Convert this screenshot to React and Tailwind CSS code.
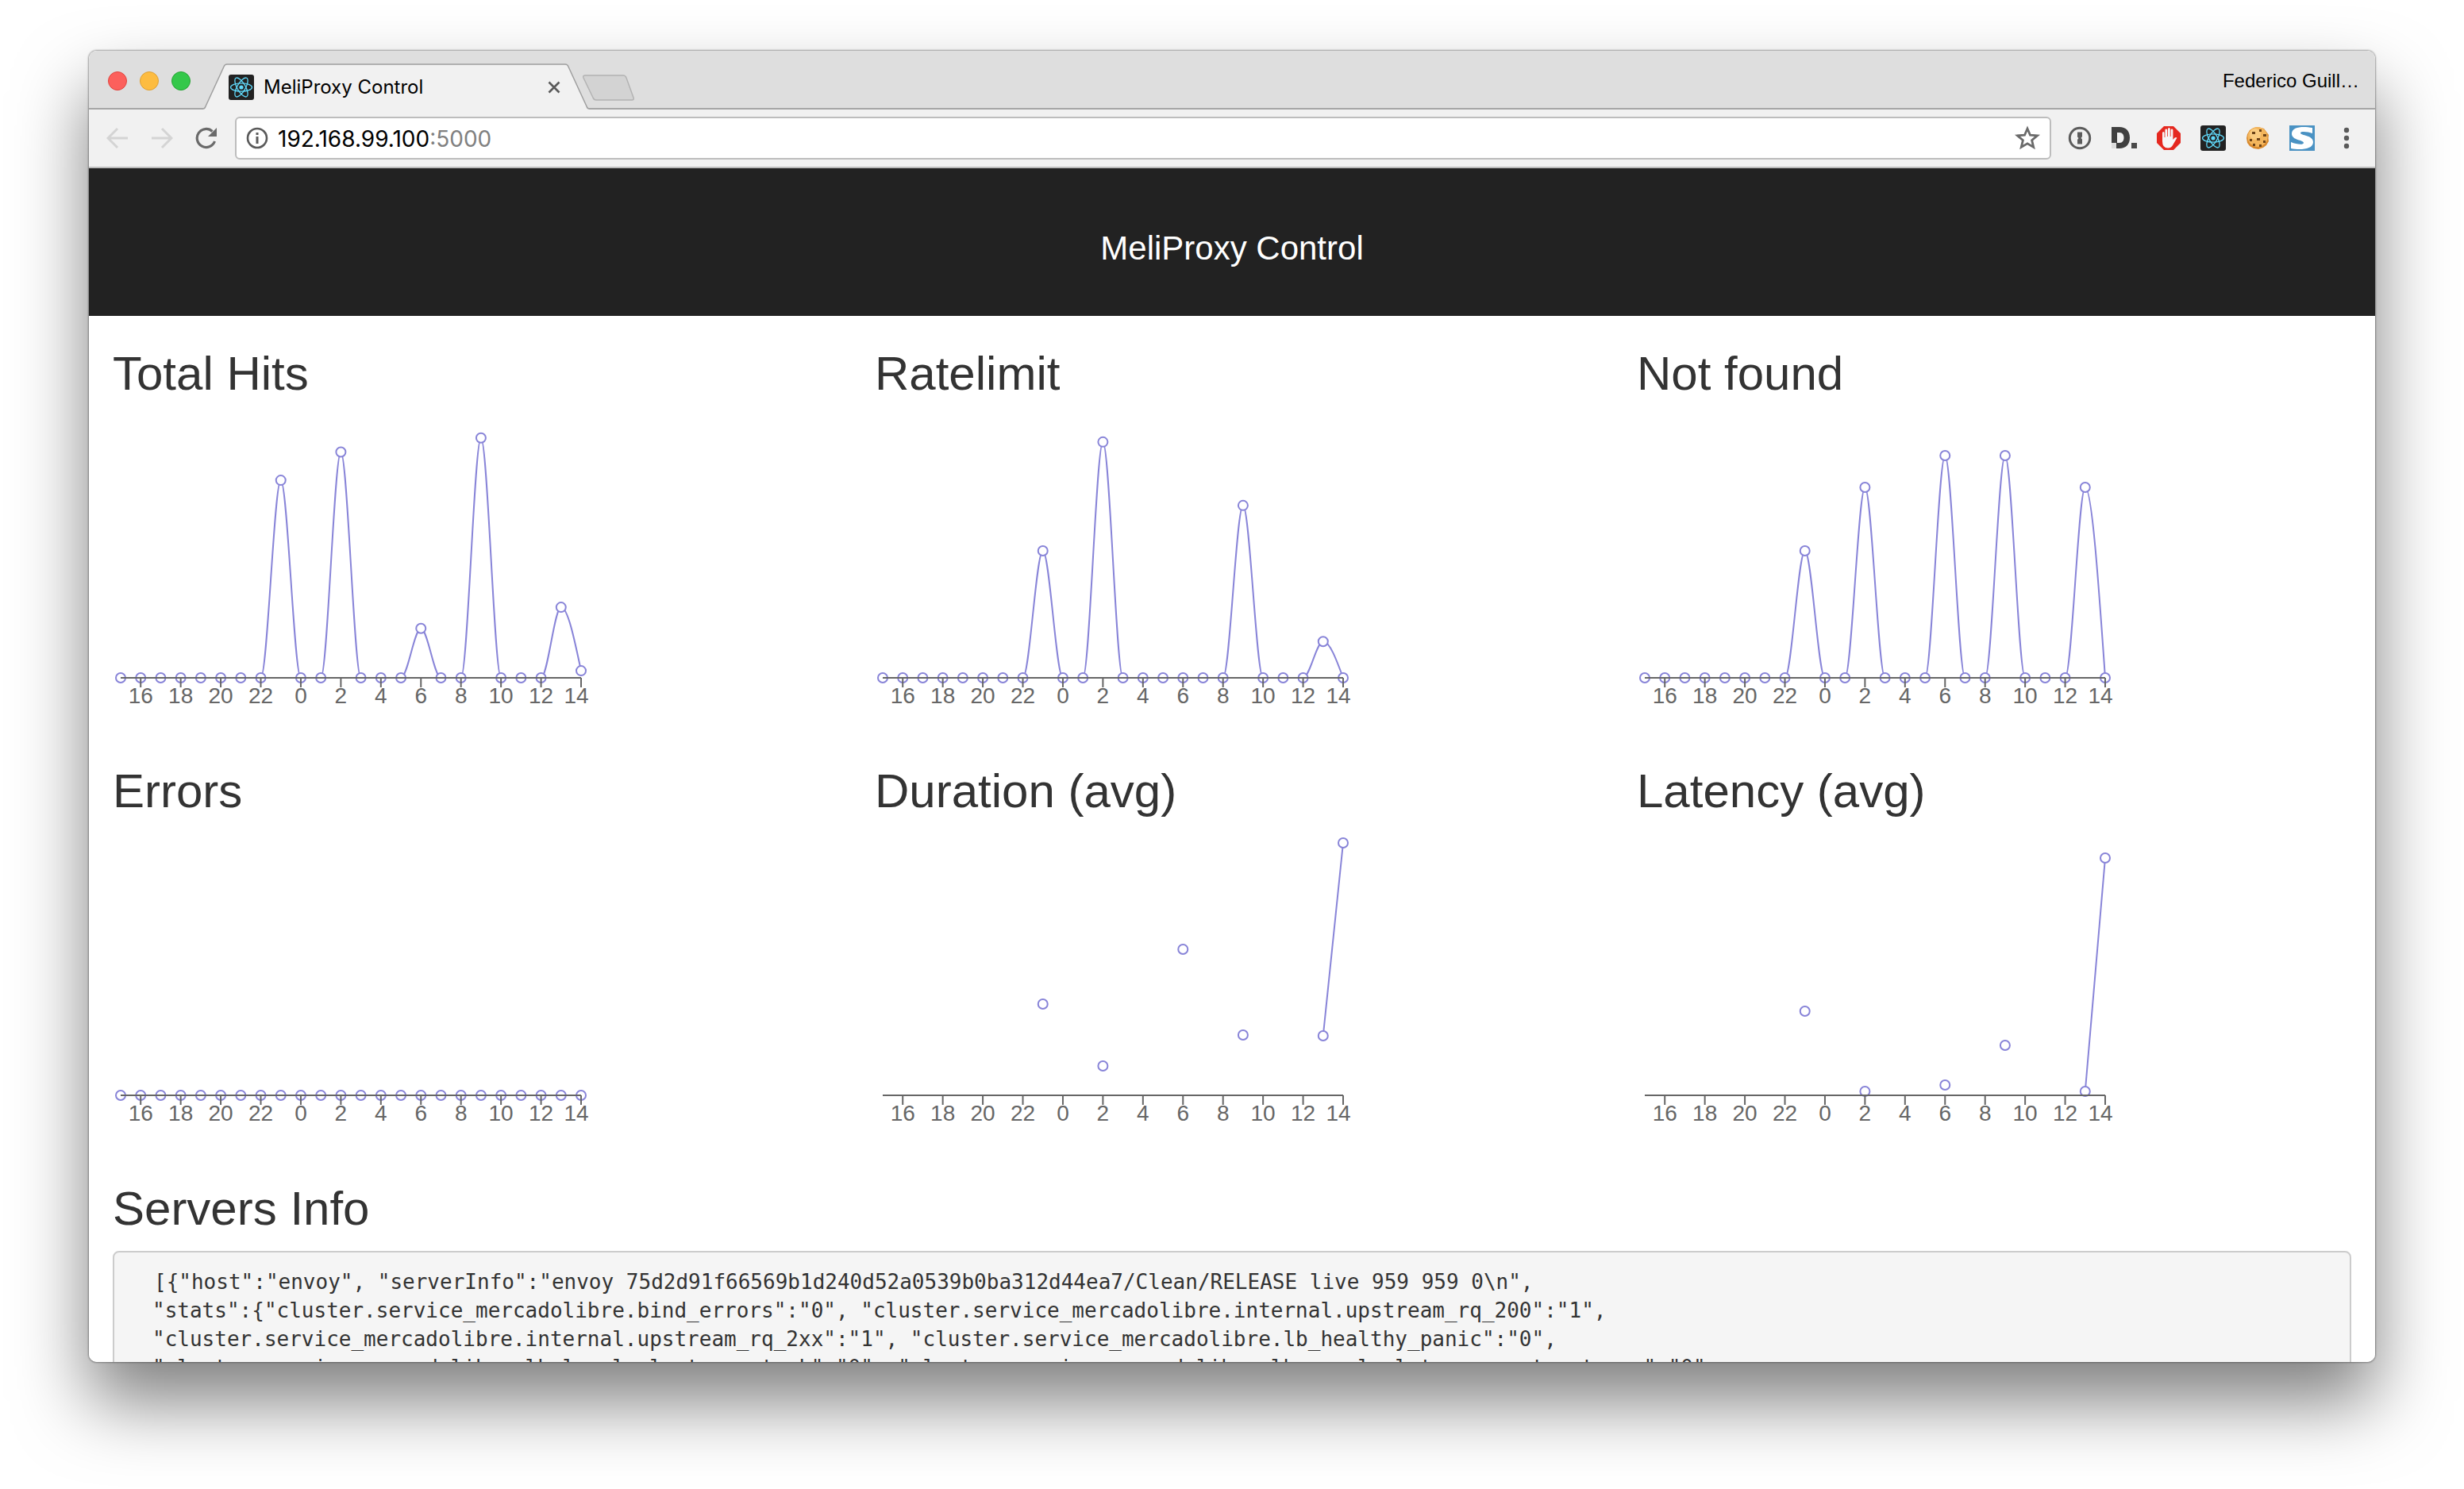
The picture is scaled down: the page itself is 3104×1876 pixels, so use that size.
import React from "react";

const HOURS = [15, 16, 17, 18, 19, 20, 21, 22, 23, 0, 1, 2, 3, 4, 5, 6, 7, 8, 9, 10, 11, 12, 13, 14];

const CHARTS = [
  { title: "Total Hits", max: 36, fill: 0, values: { 23: 28, 2: 32, 6: 7, 9: 34, 13: 10, 14: 1 } },
  { title: "Ratelimit", max: 28, fill: 0, values: { 23: 14, 2: 26, 9: 19, 13: 4 } },
  { title: "Not found", max: 8, fill: 0, values: { 23: 4, 2: 6, 6: 7, 9: 7, 13: 6 } },
  { title: "Errors", max: 4, fill: 0, values: {} },
  { title: "Duration (avg)", max: 320, fill: null, values: { 23: 115, 2: 37, 6: 184, 9: 76, 13: 75, 14: 318 } },
  { title: "Latency (avg)", max: 320, fill: null, values: { 23: 106, 2: 5, 6: 13, 9: 63, 13: 5, 14: 299 } },
];

const BASE = 330;
const PLOT = 320;

// Monotone cubic interpolation through a run of points.
function monotonePath(p) {
  const n = p.length;
  if (n < 2) return "";
  if (n === 2) return `M${p[0].x},${p[0].y}L${p[1].x},${p[1].y}`;
  const slope = (i) => (p[i + 1].y - p[i].y) / (p[i + 1].x - p[i].x);
  const t = p.map((_, i) => {
    if (i === 0 || i === n - 1) return 0;
    const a = slope(i - 1);
    const b = slope(i);
    return (Math.sign(a) + Math.sign(b)) * Math.min(Math.abs(a), Math.abs(b), 0.25 * Math.abs(a + b)) || 0;
  });
  t[0] = (3 * slope(0) - t[1]) / 2;
  t[n - 1] = (3 * slope(n - 2) - t[n - 2]) / 2;
  let d = `M${p[0].x},${p[0].y}`;
  for (let i = 0; i < n - 1; i++) {
    const h = (p[i + 1].x - p[i].x) / 3;
    d += `C${p[i].x + h},${p[i].y + h * t[i]} ${p[i + 1].x - h},${p[i + 1].y - h * t[i + 1]} ${p[i + 1].x},${p[i + 1].y}`;
  }
  return d;
}

function LineChart({ title, max, fill, values }) {
  const points = HOURS.map((hour, i) => {
    const v = values[hour] ?? fill;
    return v === null ? null : { x: 10 + (i * 580) / 23, y: BASE - (v / max) * PLOT };
  });
  const runs = [[]];
  points.forEach((pt) => (pt ? runs[runs.length - 1].push(pt) : runs.push([])));
  return (
    <svg className="block" width="600" height="400" viewBox="0 0 600 400" role="img" aria-label={title}>
      {runs.map((run, i) => (
        <path key={i} d={monotonePath(run)} fill="none" stroke="#8884d8" strokeWidth="2" />
      ))}
      {points.map((pt, i) => pt && <circle key={i} cx={pt.x} cy={pt.y} r="6" fill="#fff" stroke="#8884d8" strokeWidth="2" />)}
      <g stroke="#666" strokeWidth="2">
        <line x1="10" x2="590" y1={BASE} y2={BASE} />
        {HOURS.map((h, i) => i % 2 === 1 && <line key={h} x1={10 + (i * 580) / 23} x2={10 + (i * 580) / 23} y1={BASE} y2={BASE + 12} />)}
      </g>
      <g fill="#666" fontSize="28" textAnchor="middle">
        {HOURS.map(
          (h, i) =>
            i % 2 === 1 && (
              <text key={h} x={Math.min(10 + (i * 580) / 23, 584)} y={BASE + 32}>
                {h}
              </text>
            )
        )}
      </g>
    </svg>
  );
}

function ReactLogo() {
  return (
    <svg className="block size-8" viewBox="0 0 32 32" aria-hidden="true">
      <rect width="32" height="32" rx="3" fill="#222" />
      <g fill="none" stroke="#61dafb" strokeWidth="1.3">
        <ellipse cx="16" cy="16" rx="13.5" ry="5.2" />
        <ellipse cx="16" cy="16" rx="13.5" ry="5.2" transform="rotate(60 16 16)" />
        <ellipse cx="16" cy="16" rx="13.5" ry="5.2" transform="rotate(120 16 16)" />
      </g>
      <circle cx="16" cy="16" r="2.6" fill="#61dafb" />
    </svg>
  );
}

function IconButton({ label, children }) {
  return (
    <button type="button" aria-label={label} className="flex size-8 shrink-0 items-center justify-center">
      {children}
    </button>
  );
}

function TitleBar() {
  return (
    <div className="flex h-[74px] items-end border-b-2 border-[#a5a5a5] bg-[#dedede]">
      <div className="flex gap-4 self-center pt-1 pl-6">
        <button type="button" aria-label="Close" className="size-6 rounded-full border border-[#e0443e] bg-[#fc605c]" />
        <button type="button" aria-label="Minimize" className="size-6 rounded-full border border-[#dea034] bg-[#fdbc40]" />
        <button type="button" aria-label="Zoom" className="size-6 rounded-full border border-[#27a334] bg-[#34c84a]" />
      </div>
      <div className="relative -mb-[2px] ml-4 h-[58px] w-[486px]">
        <svg className="absolute inset-0 size-full" viewBox="0 0 486 58" preserveAspectRatio="none" aria-hidden="true">
          <path d="M0 58V57Q2 57 3 54L26 4Q27 1 30 1H456Q459 1 460 4L483 54Q484 57 486 57V58Z" fill="#f1f1f1" />
          <path d="M0 57Q2 57 3 54L26 4Q27 1 30 1H456Q459 1 460 4L483 54Q484 57 486 57" fill="none" stroke="#9f9f9f" strokeWidth="1.5" />
        </svg>
        <div className="relative flex h-full items-center gap-3 pt-0.5 pr-7 pl-8">
          <ReactLogo />
          <span className="flex-1 font-['Inter',sans-serif] text-[24px] leading-8 text-black">MeliProxy Control</span>
          <IconButton label="Close tab">
            <svg width="16" height="16" viewBox="0 0 16 16">
              <path d="M1.500 1.500L14.500 14.500M14.500 1.500L1.500 14.500" stroke="#5a5a5a" strokeWidth="2.600" />
            </svg>
          </IconButton>
        </div>
      </div>
      <button type="button" aria-label="New tab" className="mb-2 -ml-2">
        <svg className="block" width="66" height="34" viewBox="0 0 66 34">
          <path d="M3 1H51Q54 1 55 4L64 29Q65 32 62 32H17Q14 32 13 29L1 4Q0 1 3 1Z" fill="#d3d3d3" stroke="#b3b3b3" strokeWidth="1.500" />
        </svg>
      </button>
      <span className="ml-auto self-center pt-1 pr-5 text-[24px] leading-8 text-black">Federico Guill…</span>
    </div>
  );
}

function Toolbar() {
  return (
    <div className="flex h-[74px] items-center border-b-2 border-[#bcbcbc] bg-[#f1f1f1] pr-5 pl-5">
      <div className="flex gap-6">
        <IconButton label="Back">
          <svg width="28" height="28" viewBox="0 0 28 28" fill="none" stroke="#d4d4d4" strokeWidth="3">
            <path d="M27 14H3M14 2L2 14L14 26" />
          </svg>
        </IconButton>
        <IconButton label="Forward">
          <svg width="28" height="28" viewBox="0 0 28 28" fill="none" stroke="#d4d4d4" strokeWidth="3">
            <path d="M1 14H25M14 2L26 14L14 26" />
          </svg>
        </IconButton>
        <IconButton label="Reload">
          <svg width="28" height="28" viewBox="0 0 28 28">
            <path d="M24.500 18A11.500 11.500 0 1 1 21.500 5.500" fill="none" stroke="#6a6a6a" strokeWidth="3.200" />
            <path d="M27 1V12H16Z" fill="#6a6a6a" />
          </svg>
        </IconButton>
      </div>
      <div className="ml-5 flex h-[54px] min-w-0 flex-1 items-center rounded-md border-2 border-[#bdbdbd] bg-white px-3">
        <svg className="shrink-0" width="28" height="28" viewBox="0 0 28 28" aria-hidden="true">
          <circle cx="14" cy="14" r="12" fill="none" stroke="#5a5a5a" strokeWidth="2.600" />
          <path d="M14 12V21" stroke="#5a5a5a" strokeWidth="3" />
          <path d="M14 7V10" stroke="#5a5a5a" strokeWidth="3" />
        </svg>
        <a href="http://192.168.99.100:5000" className="ml-3 flex-1 pt-0.5 font-['Inter',sans-serif] text-[28px] leading-9 text-black">
          192.168.99.100<span className="text-[#808080]">:5000</span>
        </a>
        <IconButton label="Bookmark this page">
          <svg width="32" height="32" viewBox="0 0 32 32">
            <path d="M16 4L19.500 12.200L28.500 12.900L21.600 18.700L23.700 27.400L16 22.800L8.300 27.400L10.400 18.700L3.500 12.900L12.500 12.200Z" fill="none" stroke="#6a6a6a" strokeWidth="2.800" />
          </svg>
        </IconButton>
      </div>
      <div className="ml-5 flex gap-6">
        <IconButton label="1Password">
          <svg width="30" height="30" viewBox="0 0 30 30">
            <circle cx="15" cy="15" r="12.700" fill="none" stroke="#5c5c5c" strokeWidth="3" />
            <path d="M12 7.500H18V13L16.500 15L18 16.500V22.500H12V17L13.500 15L12 13.500Z" fill="#5c5c5c" />
          </svg>
        </IconButton>
        <IconButton label="Disconnect">
          <svg width="32" height="32" viewBox="0 0 32 32">
            <rect x="0" y="22" width="6" height="7" fill="#dcdcdc" />
            <path fillRule="evenodd" d="M0 2H10C18 2 23 7 23 15.500C23 24 18 29 10 29H6V22H0ZM7 9V22H10C14 22 15.500 19 15.500 15.500C15.500 12 14 9 10 9Z" fill="#404040" />
            <rect x="25" y="22" width="7" height="7" fill="#4a4a4a" />
          </svg>
        </IconButton>
        <IconButton label="AdBlock">
          <svg width="32" height="32" viewBox="0 0 32 32">
            <path d="M10 1H22L31 10V22L22 31H10L1 22V10Z" fill="#e5281f" />
            <path d="M8 18V9.500Q8 8 9.300 8T10.600 9.500V15H11.400V5.800Q11.400 4.400 12.800 4.400T14.200 5.800V14H15V4.500Q15 3 16.400 3T17.800 4.500V14H18.600V6Q18.600 4.600 20 4.600T21.400 6V18L23.600 15.600Q25.200 14.200 26.400 15.800L21.600 24Q19.500 28.500 15 28.500Q8 28.500 8 20Z" fill="#f6f6f6" />
          </svg>
        </IconButton>
        <IconButton label="React Developer Tools">
          <ReactLogo />
        </IconButton>
        <IconButton label="Cookies">
          <svg width="32" height="32" viewBox="0 0 32 32">
            <path d="M16 2L20 3L24 4L27 8L30 12L29.500 16L30 20L27 25L23 28L17 30L11 29L6 26L3 22L2 16L3 11L6 6L11 3Z" fill="#d98a2e" />
            <circle cx="16" cy="14.500" r="12.500" fill="#f3b55c" />
            <circle cx="13" cy="11" r="7" fill="#f9cb80" />
            <g fill="#6b4218">
              <rect x="9" y="8" width="4" height="3" />
              <rect x="18" y="5" width="3" height="3" />
              <rect x="15" y="16" width="4" height="3" />
              <rect x="23" y="11" width="4" height="3" />
              <rect x="6" y="17" width="3" height="3" />
              <rect x="23" y="19" width="3" height="3" />
              <rect x="10" y="23" width="3" height="3" />
              <rect x="18" y="24" width="3" height="3" />
            </g>
          </svg>
        </IconButton>
        <IconButton label="Stylish">
          <svg width="32" height="32" viewBox="0 0 32 32">
            <rect width="32" height="32" fill="#4a92c3" />
            <path d="M29 3V10C24 8 14 7 14 9.500C14 13 30 12 30 21C30 31 12 31 2 29V21C9 24 18 25 18 22C18 18 3 19 3 10.500C3 1 18 1 29 3Z" fill="#fff" />
          </svg>
        </IconButton>
        <IconButton label="Menu">
          <svg width="8" height="28" viewBox="0 0 8 28" fill="#5a5a5a">
            <circle cx="4" cy="4" r="3.200" />
            <circle cx="4" cy="14" r="3.200" />
            <circle cx="4" cy="24" r="3.200" />
          </svg>
        </IconButton>
      </div>
    </div>
  );
}

const SERVER_INFO = `[{"host":"envoy", "serverInfo":"envoy 75d2d91f66569b1d240d52a0539b0ba312d44ea7/Clean/RELEASE live 959 959 0\\n",
"stats":{"cluster.service_mercadolibre.bind_errors":"0", "cluster.service_mercadolibre.internal.upstream_rq_200":"1",
"cluster.service_mercadolibre.internal.upstream_rq_2xx":"1", "cluster.service_mercadolibre.lb_healthy_panic":"0",
"cluster.service_mercadolibre.lb_local_cluster_not_ok":"0", "cluster.service_mercadolibre.lb_recalculate_zone_structures":"0",`;

function Heading({ children }) {
  return <h2 className="pt-10 pb-5 text-[60px] leading-[66px] text-[#333]">{children}</h2>;
}

export default function App() {
  return (
    <div className="h-screen overflow-hidden bg-white px-28 pt-16 pb-40 font-['Liberation_Sans',sans-serif]">
      <div className="h-full rounded-[10px] shadow-[0_0_2px_1px_rgba(0,0,0,0.35),0_50px_90px_rgba(0,0,0,0.5)]">
        <div className="flex h-full flex-col overflow-hidden rounded-[10px] bg-white">
          <TitleBar />
          <Toolbar />
          <main className="min-h-0 flex-1 overflow-hidden">
            <header className="flex h-[186px] items-center justify-center bg-[#222] pt-4">
              <h1 className="text-[42px] leading-[48px] text-white">MeliProxy Control</h1>
            </header>
            <div className="grid grid-cols-3">
              {CHARTS.map((chart) => (
                <section key={chart.title} className="px-[30px]">
                  <Heading>{chart.title}</Heading>
                  <LineChart {...chart} />
                </section>
              ))}
            </div>
            <section className="px-[30px]">
              <Heading>Servers Info</Heading>
              <pre className="overflow-hidden rounded-lg border-2 border-[#ccc] bg-[#f5f5f5] py-[19px] pr-5 pl-12 font-['DejaVu_Sans_Mono',monospace] text-[26px] leading-9 text-[#333]">
                <code className="pl-0.5 font-['DejaVu_Sans_Mono',monospace]">{SERVER_INFO}</code>
              </pre>
            </section>
          </main>
        </div>
      </div>
    </div>
  );
}
